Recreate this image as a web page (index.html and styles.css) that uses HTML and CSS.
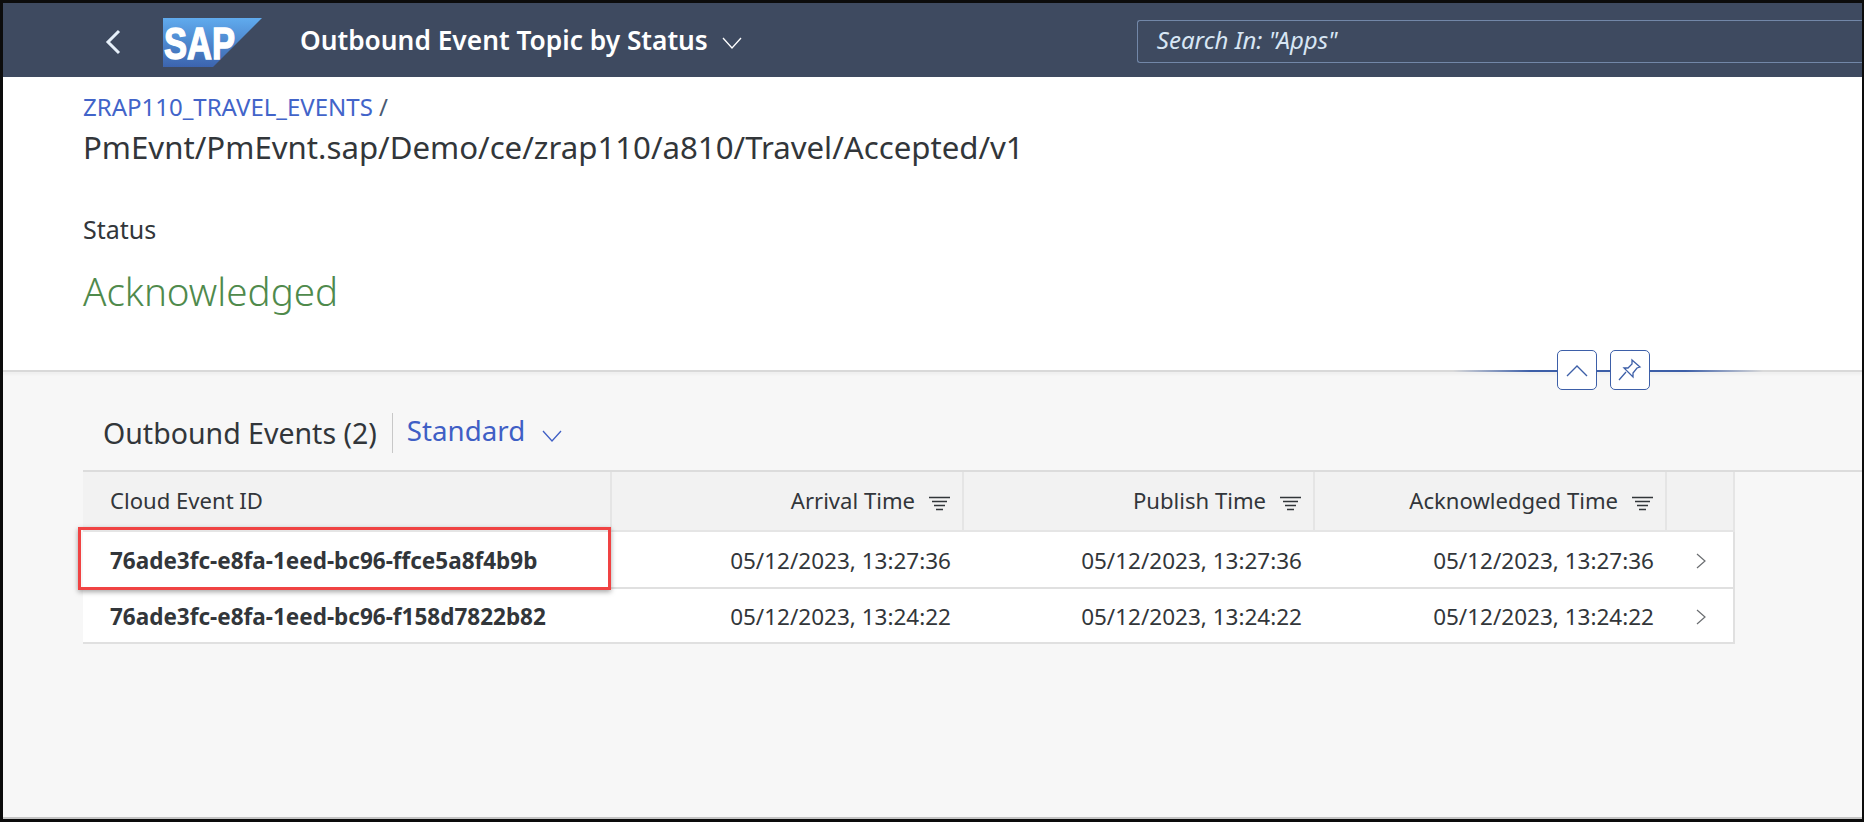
FILE: index.html
```html
<!doctype html>
<html lang="en">
	<head>
		<meta charset="UTF-8">
		<title>Outbound Event Topic by Status</title>
		<link rel="stylesheet" href="styles.css">
	</head>
	<body>
		<div class="frame">
			<header class="shell">
				<svg class="back" width="16" height="26" viewBox="0 0 16 26"><path d="M14 2 3 13l11 11" fill="none" stroke="#e6f0fa" stroke-width="3"/></svg>
				<div class="logo">
					<svg width="99" height="49" viewBox="0 0 99 49">
						<defs>
							<linearGradient id="sapBlue" x1="0" y1="0" x2="0" y2="1">
								<stop offset="0" stop-color="#60abee"/>
								<stop offset="1" stop-color="#3c64ae"/>
							</linearGradient>
						</defs>
						<polygon points="0,0 99,0 50,49 0,49" fill="url(#sapBlue)"/>
						<text class="logo-text" x="1" y="41" textLength="71" lengthAdjust="spacingAndGlyphs">SAP</text>
					</svg>
				</div>
				<div class="app-title">Outbound Event Topic by Status</div>
				<svg class="title-caret" width="20" height="12" viewBox="0 0 20 12"><path d="M1 1l9 10 9-10" fill="none" stroke="#fff" stroke-width="1.3"/></svg>
				<div class="search">Search In: "Apps"</div>
			</header>

			<section class="object-head">
				<div class="crumbs"><a href="javascript:;">ZRAP110_TRAVEL_EVENTS</a> /</div>
				<h1 class="object-title">PmEvnt/PmEvnt.sap/Demo/ce/zrap110/a810/Travel/Accepted/v1</h1>
				<div class="status-label">Status</div>
				<div class="status-value">Acknowledged</div>
			</section>

			<div class="head-bar">
				<div class="bar-line"></div>
				<a class="bar-btn btn-up" href="javascript:;">
					<svg width="22" height="14" viewBox="0 0 22 14"><path d="M1 13 11 3l10 10" fill="none" stroke="#3d5fa8" stroke-width="1.4"/></svg>
				</a>
				<a class="bar-btn btn-pin" href="javascript:;">
					<svg width="24" height="24" viewBox="0 0 24 24"><path d="M14 2l8 7-3 1-4 5 0 4-9-9 4 0 4-4zM8 14 1 22" fill="none" stroke="#3d5fa8" stroke-width="1.3"/></svg>
				</a>
			</div>

			<main class="content">
				<div class="toolbar">
					<span class="table-title">Outbound Events (2)</span>
					<span class="variant">Standard</span>
					<svg class="variant-caret" width="20" height="12" viewBox="0 0 20 12"><path d="M1 1l9 10 9-10" fill="none" stroke="#3f5fc5" stroke-width="1.3"/></svg>
				</div>

				<div class="table-wrap">
					<table class="events">
						<colgroup>
							<col class="col-id">
							<col class="col-time">
							<col class="col-time2">
							<col class="col-time3">
							<col class="col-nav">
						</colgroup>
						<thead>
							<tr>
								<th class="left">Cloud Event ID</th>
								<th>Arrival Time<svg class="sort" width="21" height="15" viewBox="0 0 21 15"><path d="M0 1.500h21M3 5.500h15M5 9.500h11M7 13.500h7" stroke="#32363a" stroke-width="1.500"/></svg></th>
								<th>Publish Time<svg class="sort" width="21" height="15" viewBox="0 0 21 15"><path d="M0 1.500h21M3 5.500h15M5 9.500h11M7 13.500h7" stroke="#32363a" stroke-width="1.500"/></svg></th>
								<th>Acknowledged Time<svg class="sort" width="21" height="15" viewBox="0 0 21 15"><path d="M0 1.500h21M3 5.500h15M5 9.500h11M7 13.500h7" stroke="#32363a" stroke-width="1.500"/></svg></th>
								<th></th>
							</tr>
						</thead>
						<tbody>
							<tr>
								<td class="left id">76ade3fc-e8fa-1eed-bc96-ffce5a8f4b9b</td>
								<td>05/12/2023, 13:27:36</td>
								<td>05/12/2023, 13:27:36</td>
								<td>05/12/2023, 13:27:36</td>
								<td class="nav"><svg width="11" height="16" viewBox="0 0 11 16"><path d="M1 1l8 7-8 7" fill="none" stroke="#6a6d70" stroke-width="1.200"/></svg></td>
							</tr>
							<tr>
								<td class="left id">76ade3fc-e8fa-1eed-bc96-f158d7822b82</td>
								<td>05/12/2023, 13:24:22</td>
								<td>05/12/2023, 13:24:22</td>
								<td>05/12/2023, 13:24:22</td>
								<td class="nav"><svg width="11" height="16" viewBox="0 0 11 16"><path d="M1 1l8 7-8 7" fill="none" stroke="#6a6d70" stroke-width="1.200"/></svg></td>
							</tr>
						</tbody>
					</table>
					<div class="callout"></div>
				</div>
			</main>
		</div>
	</body>
</html>
```

FILE: styles.css
```css
* {
	box-sizing: border-box;
}

html,
body {
	margin: 0;
	padding: 0;
	height: 100%;
	overflow: hidden;
}

body {
	font-family: "Noto Sans", "Liberation Sans", sans-serif;
	color: #32363a;
}

.frame {
	width: 1864px;
	height: 822px;
	border: 3px solid #0c0c0c;
	border-right-width: 2px;
	background: #f7f7f7;
	display: flex;
	flex-direction: column;
}

/* shell bar */
.shell {
	height: 74px;
	flex: none;
	background: #3e4a60;
	display: flex;
	align-items: center;
	padding-left: 102px;
}

.back {
	margin-top: 4px;
}

.logo {
	margin-left: 42px;
	height: 49px;
	margin-top: 5px;
}

.logo-text {
	font-family: "Liberation Sans", sans-serif;
	font-weight: 700;
	font-size: 44px;
	fill: #fff;
	stroke: #fff;
	stroke-width: 1.5px;
}

.app-title {
	margin-left: 38px;
	font-size: 26.300px;
	font-weight: 600;
	color: #fff;
	white-space: nowrap;
}

.title-caret {
	margin-left: 14px;
	margin-top: 6px;
}

.search {
	margin-left: 395px;
	flex: 1;
	height: 43px;
	margin-top: 2px;
	line-height: 37px;
	padding-left: 19px;
	border: 1px solid #7287a8;
	border-right: 0;
	border-radius: 3px 0 0 3px;
	color: #d8e6f4;
	font-size: 24px;
	font-style: italic;
}

/* object header */
.object-head {
	height: 293px;
	flex: none;
	background: #fff;
	padding: 16px 0 0 80px;
}

.crumbs {
	font-size: 24px;
	line-height: 28px;
	color: #4a5a72;
}

.crumbs a {
	color: #4264c9;
	text-decoration: none;
}

.object-title {
	margin: 6px 0 0;
	font-size: 31.200px;
	line-height: 40px;
	font-weight: 400;
}

.status-label {
	margin-top: 47px;
	font-size: 25px;
	line-height: 30px;
}

.status-value {
	margin-top: 22px;
	font-size: 38.600px;
	line-height: 50px;
	font-weight: 300;
	color: #4f8a4c;
}

/* collapse bar */
.head-bar {
	position: relative;
	height: 2px;
	flex: none;
	background: #d9d9d9;
	box-shadow: 0 2px 3px rgba(0, 0, 0, 0.06);
}

.bar-line {
	position: absolute;
	left: 1450px;
	top: 0;
	width: 310px;
	height: 1.500px;
	background: linear-gradient(to right, rgba(61, 95, 168, 0), #3d5fa8 25%, #3d5fa8 75%, rgba(61, 95, 168, 0));
}

.bar-btn {
	position: absolute;
	top: -20px;
	width: 40px;
	height: 40px;
	border: 1.500px solid #3d5fa8;
	border-radius: 5px;
	background: #fff;
	display: flex;
	align-items: center;
	justify-content: center;
}

.btn-up {
	left: 1554px;
}

.btn-pin {
	left: 1607px;
}

/* table */
.content {
	flex: 1;
	padding-left: 80px;
	border-bottom: 2px solid #c4c4c4;
}

.toolbar {
	height: 98px;
	display: flex;
	align-items: center;
	padding-left: 20px;
	padding-top: 24px;
}

.table-title {
	font-size: 28.500px;
	padding-right: 15px;
	border-right: 1px solid #c8c8c8;
	line-height: 40px;
}

.variant {
	margin-left: 14px;
	font-size: 27.700px;
	color: #3f5fc5;
	margin-top: -6px;
}

.variant-caret {
	margin-left: 17px;
	margin-top: 6px;
}

.table-wrap {
	position: relative;
	border-top: 2px solid #dcdcdc;
}

.events {
	width: 1651px;
	table-layout: fixed;
	border-collapse: collapse;
	font-size: 22.500px;
}

.col-id {
	width: 528px;
}

.col-time {
	width: 352px;
}

.col-time2 {
	width: 351px;
}

.col-time3 {
	width: 352px;
}

.col-nav {
	width: 68px;
}

.events th {
	height: 59px;
	background: #f2f2f2;
	font-size: 22.100px;
	font-weight: 400;
	text-align: right;
	padding: 0 12px 2px 0;
	border-right: 2px solid #e5e5e5;
	border-bottom: 2px solid #e5e5e5;
	white-space: nowrap;
}

.events td {
	height: 57px;
	background: #fff;
	text-align: right;
	padding: 2px 12px 0 0;
	border-bottom: 2px solid #e0e0e0;
	white-space: nowrap;
}

.events tbody tr:last-child td {
	height: 55px;
}

.events .left {
	text-align: left;
	padding-left: 27px;
}

.events .id {
	font-weight: 700;
}

.events .nav {
	text-align: left;
	padding-left: 30px;
	padding-right: 0;
	border-right: 2px solid #e0e0e0;
}

.sort {
	margin-left: 14px;
	vertical-align: -2px;
}

.callout {
	position: absolute;
	left: -5px;
	top: 55px;
	width: 533px;
	height: 63px;
	border: 3px solid #f04343;
	box-shadow: 0 2px 5px rgba(0, 0, 0, 0.35);
}
```
